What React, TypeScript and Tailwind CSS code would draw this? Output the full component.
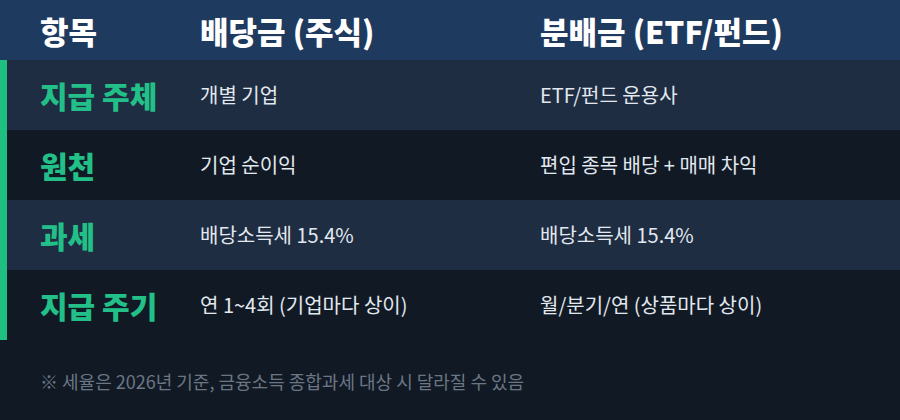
const rows = [
  { label: "지급 주체", stock: "개별 기업", fund: "ETF/펀드 운용사" },
  { label: "원천", stock: "기업 순이익", fund: "편입 종목 배당 + 매매 차익" },
  { label: "과세", stock: "배당소득세 15.4%", fund: "배당소득세 15.4%" },
  { label: "지급 주기", stock: "연 1~4회 (기업마다 상이)", fund: "월/분기/연 (상품마다 상이)" },
];

export default function App() {
  return (
    <div
      className="w-[900px] h-[420px] bg-[#111a24] text-[#e2e8f0] overflow-hidden"
      style={{ fontFamily: '"Noto Sans CJK KR", "Noto Sans", sans-serif' }}
    >
      {/* Header */}
      <div className="h-[60px] bg-[#1f3a5f] flex items-center text-white font-black text-[31px] leading-none">
        <div className="w-[200px] pl-[40px]">항목</div>
        <div className="w-[340px]">배당금 (주식)</div>
        <div className="flex-1">분배금 (ETF/펀드)</div>
      </div>

      {/* Rows */}
      <div className="border-l-[7px] border-[#1fbf82]">
        {rows.map((row, idx) => (
          <div
            key={idx}
            className={
              "h-[70px] flex items-center " +
              (idx % 2 === 0 ? "bg-[#1e2d41]" : "bg-[#111a24]")
            }
          >
            <div className="w-[193px] pl-[33px] text-[30px] leading-none font-black text-[#22c088]">
              {row.label}
            </div>
            <div className="w-[340px] text-[20px]">{row.stock}</div>
            <div className="flex-1 text-[20px]">{row.fund}</div>
          </div>
        ))}
      </div>

      {/* Note */}
      <p className="pl-[40px] pt-[28px] text-[18px] text-[#6b7685]">
        ※ 세율은 2026년 기준, 금융소득 종합과세 대상 시 달라질 수 있음
      </p>
    </div>
  );
}
